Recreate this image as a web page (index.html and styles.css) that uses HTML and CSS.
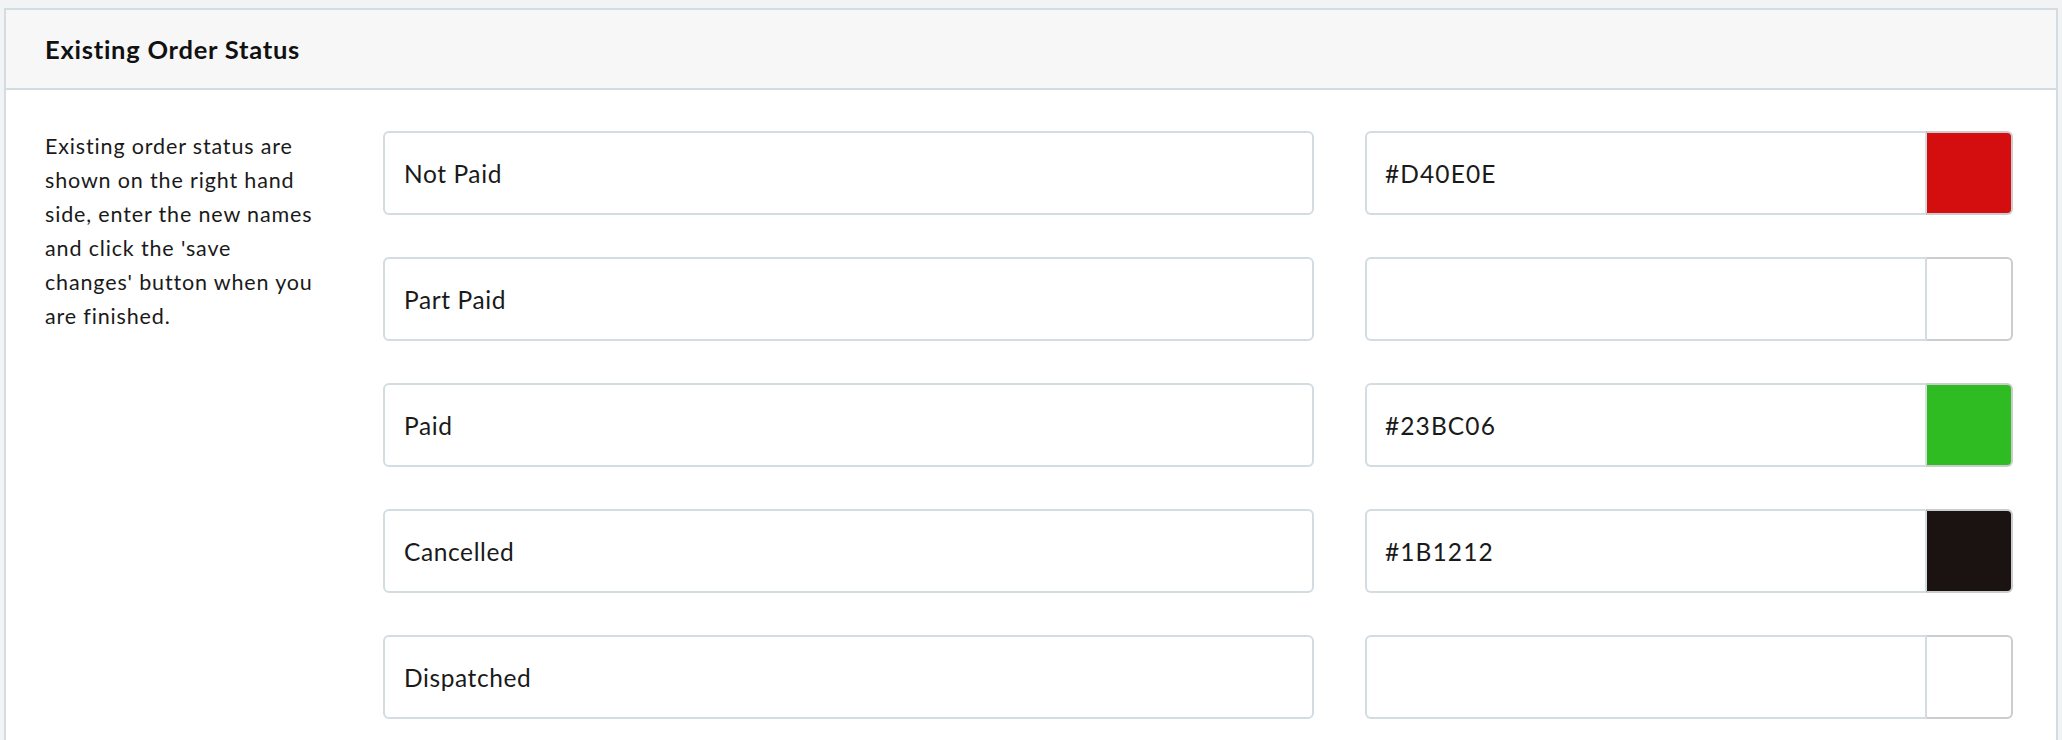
FILE: index.html
```html
<!DOCTYPE html>
<html lang="en">
<head>
<meta charset="utf-8">
<title>Existing Order Status</title>
<link rel="stylesheet" href="styles.css">
</head>
<body>
<section class="panel">
  <header class="panel-head">
    <h2 class="panel-title">Existing Order Status</h2>
  </header>
  <div class="panel-body">
    <div class="help-col">
      <p class="help">Existing order status are shown on the right hand side, enter the new names and click the 'save changes' button when you are finished.</p>
    </div>
    <div class="rows">
      <div class="row">
        <div class="field"><span class="field-text">Not Paid</span></div>
        <div class="color">
          <div class="color-text">#D40E0E</div>
          <div class="swatch" style="background:#D40E0E"></div>
        </div>
      </div>
      <div class="row">
        <div class="field"><span class="field-text">Part Paid</span></div>
        <div class="color">
          <div class="color-text"></div>
          <div class="swatch"></div>
        </div>
      </div>
      <div class="row">
        <div class="field"><span class="field-text">Paid</span></div>
        <div class="color">
          <div class="color-text">#23BC06</div>
          <div class="swatch" style="background:#2fbb22"></div>
        </div>
      </div>
      <div class="row">
        <div class="field"><span class="field-text">Cancelled</span></div>
        <div class="color">
          <div class="color-text">#1B1212</div>
          <div class="swatch" style="background:#1b1212"></div>
        </div>
      </div>
      <div class="row">
        <div class="field"><span class="field-text">Dispatched</span></div>
        <div class="color">
          <div class="color-text"></div>
          <div class="swatch"></div>
        </div>
      </div>
    </div>
  </div>
</section>
</body>
</html>
```
FILE: styles.css
```css
html, body {
  margin: 0;
  padding: 0;
}
body {
  background: #f1f3f5;
  padding: 8px 4px 0 4px;
  font-family: "Lato", "Open Sans", sans-serif;
  color: #1a1a1a;
}
.panel {
  border: 2px solid #d3dde1;
  border-bottom: none;
  background: #fff;
}
.panel-head {
  background: #f7f7f7;
  border-bottom: 2px solid #d3dde1;
  height: 78px;
  display: flex;
  align-items: center;
  padding: 0 39px;
}
.panel-title {
  margin: 0;
  font-size: 25.5px;
  font-weight: 700;
  color: #111;
  letter-spacing: 0.75px;
}
.panel-body {
  display: flex;
  padding: 41px 43px 40px 39px;
  gap: 41px;
}
.help-col {
  width: 297px;
  flex: none;
}
.help {
  width: 272px;
  margin: -2px 0 0 0;
  font-size: 21.5px;
  line-height: 34px;
  letter-spacing: 0.85px;
  color: #1a1a1a;
}
.rows {
  flex: 1;
  display: flex;
  flex-direction: column;
  gap: 42px;
}
.row {
  display: flex;
  gap: 51px;
  height: 84px;
}
.field {
  width: 931px;
  box-sizing: border-box;
  border: 2px solid #d3dde1;
  border-radius: 6px;
  display: flex;
  align-items: center;
  padding: 0 19px;
  font-size: 24.5px;
  letter-spacing: 0.6px;
}
.color {
  width: 648px;
  display: flex;
}
.color-text {
  flex: 1;
  box-sizing: border-box;
  border: 2px solid #d3dde1;
  border-right: none;
  border-radius: 6px 0 0 6px;
  display: flex;
  align-items: center;
  padding: 0 18px;
  font-size: 24.5px;
  letter-spacing: 1.1px;
}
.swatch {
  width: 88px;
  box-sizing: border-box;
  border: 2px solid #cacccd;
  border-left: 2px solid #d3dde1;
  border-radius: 0 6px 6px 0;
  background: #fff;
}
```
